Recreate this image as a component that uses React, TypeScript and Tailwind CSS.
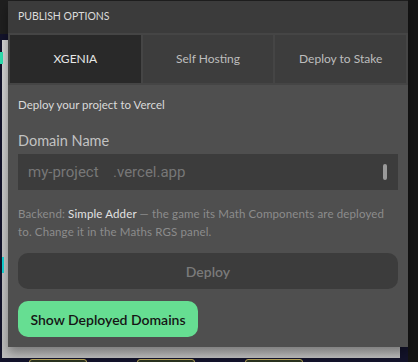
import React, { useState } from "react";

const TABS = ["XGENIA", "Self Hosting", "Deploy to Stake"];

export default function App() {
  const [tab, setTab] = useState(0);
  const [domain, setDomain] = useState("");

  return (
    <div className="relative h-[362px] w-[418px] overflow-hidden bg-[#13132b] font-['Lato',sans-serif]">
      {/* backdrop of the app behind the modal */}
      <div className="absolute left-0 top-0 h-[34px] w-[418px] bg-[#1f1f1f]" />
      <div className="absolute left-[2px] top-[40px] h-[318px] w-[398px] bg-gradient-to-b from-[#d4d4d4] to-[#bdbdbd]" />
      <div className="absolute left-0 top-[40px] h-[318px] w-[2px] bg-[#13132b]" />
      <div className="absolute left-0 top-[52px] h-[12px] w-[3px] bg-[#2fe0b0]" />
      <div className="absolute left-[2px] top-[257px] h-[16px] w-[2px] bg-[#14d6d6]" />
      <div className="absolute right-0 top-0 h-[362px] w-[10px] bg-[#151515]" />
      {[29, 137, 245].map((x) => (
        <div key={x} className="absolute top-[359px] h-[6px] w-[58px] rounded-t-[3px] border border-[#b8a45a] bg-[#2b3320]" style={{ left: x }} />
      ))}

      {/* modal */}
      <div className="absolute left-[8px] top-[1px] w-[400px] bg-[#4f4f4f] shadow-[0_6px_10px_rgba(0,0,0,0.35)]">
        <div className="flex h-[32px] items-center bg-[#3b3b3b] px-[10px] text-[10.5px] uppercase text-[#dcdcdc]">
          Publish Options
        </div>
        <div className="grid grid-cols-3 gap-[2px] bg-[#454545] p-[2px]">
          {TABS.map((t, i) => (
            <button
              key={t}
              onClick={() => setTab(i)}
              className={`h-[48px] text-[12px] ${i === tab ? "bg-[#292929] text-[#e6e6e6]" : "bg-[#3d3d3d] text-[#bdbdbd]"}`}
            >
              {t}
            </button>
          ))}
        </div>

        <div className="flex flex-col px-[10px] pb-[10px] pt-[12px]">
          <p className="text-[11.5px] leading-[16px] text-[#dadada]">Deploy your project to Vercel</p>

          <label className="mt-[18px] block text-[14.5px] leading-[20px] text-[#c2c2c2]">Domain Name</label>
          <div className="mt-[3px] flex h-[36px] items-center bg-[#3c3c3c] pl-[10px] pr-[11px] font-['Roboto',sans-serif] text-[15px] text-[#777]">
            <input
              value={domain}
              onChange={(e) => setDomain(e.target.value)}
              placeholder="my-project"
              className="w-[82px] bg-transparent text-[#cfcfcf] outline-none placeholder:text-[#777]"
            />
            <span className="ml-[3px]">.vercel.app</span>
            <span className="ml-auto h-[16px] w-[4px] rounded-full bg-[#9a9a9a]" />
          </div>

          <p className="mt-[15px] text-[11.5px] leading-[18px] tracking-[0.012em] text-[#8c8c8c]">
            Backend: <span className="text-[#e2e2e2]">Simple Adder</span> — the game its Math Components are deployed to. Change it in the Maths RGS panel.
          </p>

          <button className="mt-[12px] h-[36px] w-full rounded-[10px] bg-[#3c3c3c] text-[14px] font-semibold text-[#7a7a7a]">
            Deploy
          </button>

          <button className="mt-[12px] h-[36px] w-[180px] rounded-[10px] bg-[#66de92] text-[14px] font-semibold text-[#151515]">
            Show Deployed Domains
          </button>
        </div>
      </div>
    </div>
  );
}
